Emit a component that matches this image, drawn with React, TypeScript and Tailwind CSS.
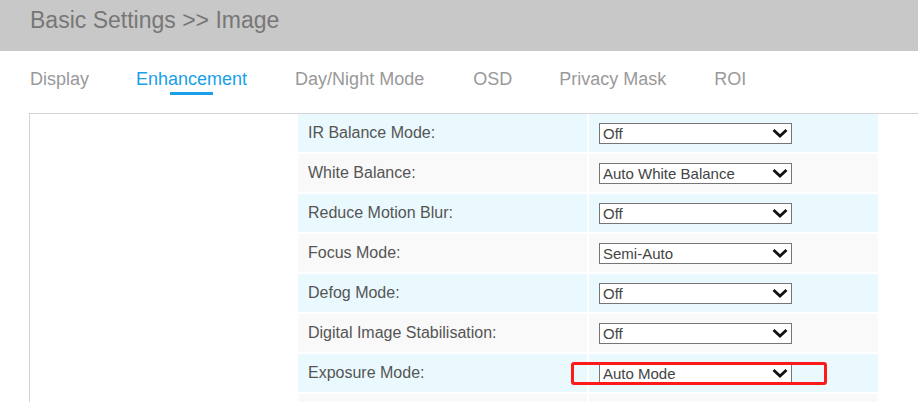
const tabs = [
  { name: 'Display', gap: '' },
  { name: 'Enhancement', gap: 'ml-[47px]' },
  { name: 'Day/Night Mode', gap: 'ml-[48px]' },
  { name: 'OSD', gap: 'ml-[49px]' },
  { name: 'Privacy Mask', gap: 'ml-[47px]' },
  { name: 'ROI', gap: 'ml-[48px]' },
]

const rows = [
  { label: 'IR Balance Mode:', value: 'Off' },
  { label: 'White Balance:', value: 'Auto White Balance' },
  { label: 'Reduce Motion Blur:', value: 'Off' },
  { label: 'Focus Mode:', value: 'Semi-Auto' },
  { label: 'Defog Mode:', value: 'Off' },
  { label: 'Digital Image Stabilisation:', value: 'Off' },
  { label: 'Exposure Mode:', value: 'Auto Mode', marked: true },
]

function Select({ value }: { value: string }) {
  return (
    <div className="w-[193px] h-[21px] bg-white border border-[#767676] flex items-center justify-between pl-[3px] pr-[2px]">
      <span className="text-[15px] leading-none text-[#444]">{value}</span>
      <svg width="16" height="10" viewBox="0 0 16 10" className="mr-[1px]">
        <polyline points="1.5,2 8,8 14.5,2" fill="none" stroke="#111" strokeWidth="2.8" />
      </svg>
    </div>
  )
}

export default function App() {
  return (
    <div className="h-[402px] w-[918px] overflow-hidden bg-white" style={{ fontFamily: '"Liberation Sans", Arial, sans-serif' }}>
      <div className="h-[51px] bg-[#c8c8c8] pl-[30px] pt-[9px]">
        <h1 className="text-[23px] leading-none text-[#777]">Basic Settings &gt;&gt; Image</h1>
      </div>

      <div className="h-[62px] flex pl-[30px] pt-[19px]">
        {tabs.map((t, i) => (
          <div key={t.name} className={`flex flex-col items-center ${t.gap}`}>
            <span className={`text-[18px] leading-none ${i === 1 ? 'text-[#1a9fe8]' : 'text-[#999]'}`}>{t.name}</span>
            {i === 1 && <div className="mt-[4px] h-[3px] w-[43px] bg-[#1a9fe8]" />}
          </div>
        ))}
      </div>

      <div className="ml-[29px] border-l border-t border-[#d3d3d3] pl-[268px] h-[300px]">
        <div className="w-[580px] flex flex-col gap-[2px]">
          {rows.map((r, i) => {
            const bg = i % 2 === 0 ? 'bg-[#eaf9fe]' : 'bg-[#f9f9f9]'
            return (
              <div key={r.label} className="relative flex gap-[2px] h-[38px]">
                <div className={`flex-1 ${bg} flex items-center pl-[10px] text-[16px] text-[#555]`}>{r.label}</div>
                <div className={`flex-1 ${bg} flex items-center pl-[10px]`}>
                  <Select value={r.value} />
                </div>
                {r.marked && (
                  <div className="absolute left-[273px] top-[8px] w-[256px] h-[23px] border-[3px] border-[#ff1a1a] rounded-[3px]" />
                )}
              </div>
            )
          })}
          <div className="flex gap-[2px] h-[38px]">
            <div className="flex-1 bg-[#f9f9f9]" />
            <div className="flex-1 bg-[#f9f9f9]" />
          </div>
        </div>
      </div>
    </div>
  )
}
